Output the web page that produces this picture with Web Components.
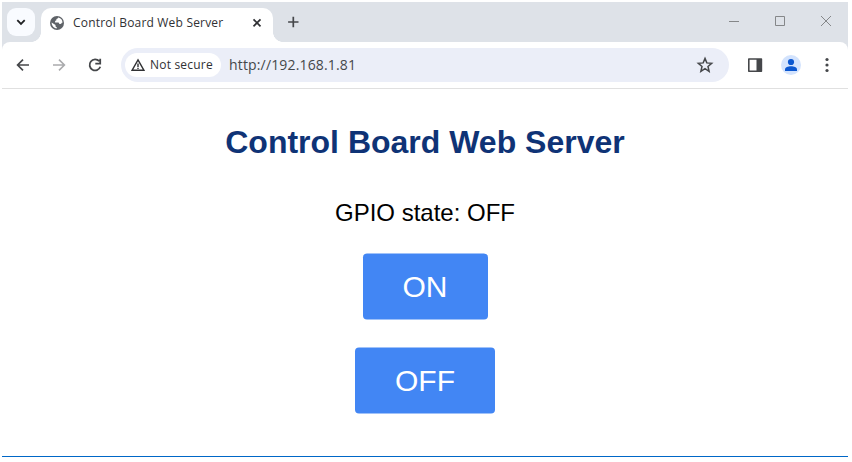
<!DOCTYPE html>
<html lang="en"><head><meta charset="utf-8"><title>Control Board Web Server</title>
<style>html,body{margin:0;background:#fff}body{width:852px;height:462px;overflow:hidden}</style></head>
<body>
<browser-window>
 <tab-strip slot="tabs"><browser-tab>Control Board Web Server</browser-tab></tab-strip>
 <nav-bar slot="nav"><address-bar><span slot="status">Not secure</span>http://192.168.1.81</address-bar></nav-bar>
 <control-page>
  <span slot="title">Control Board Web Server</span>
  <span slot="state">GPIO state: OFF</span>
  <gpio-button>ON</gpio-button>
  <gpio-button>OFF</gpio-button>
 </control-page>
</browser-window>
<script>
function define(name, html) {
  const t = document.createElement('template');
  t.innerHTML = html;
  customElements.define(name, class extends HTMLElement {
    constructor() { super(); this.attachShadow({mode:'open'}).append(t.content.cloneNode(true)); }
  });
}
define('browser-window', `<style>
:host{display:flex;flex-direction:column;box-sizing:border-box;width:846px;height:455px;margin:2px 0 0 2px;border-bottom:1px solid #0067c7;background:#fff}
.chrome{background:#dee2e8;height:86px;border-bottom:1px solid #e0e0e0;flex:none}
</style><div class="chrome"><slot name="tabs"></slot><slot name="nav"></slot></div><slot></slot>`);
define('tab-strip', `<style>
:host{display:flex;height:40px}
svg{display:block}
.search{width:28px;height:28px;border-radius:9px;background:#f9fbff;margin:6px 6px 0 5px;flex:none}
.plus{margin:14px 0 0 14px;flex:none}
.win{margin:10px 13px 0 auto;display:flex;gap:28px}
</style>
<div class="search"><svg width="28" height="28" fill="none" stroke="#202124" stroke-width="1.8"><path d="M10.3 12.2l3.7 3.7 3.7-3.7"/></svg></div>
<slot></slot>
<svg class="plus" width="12" height="12" stroke="#45474a" stroke-width="1.7"><path d="M6.300 .8v10.4M1.100 6h10.400"/></svg>
<div class="win">
<svg width="18" height="18" stroke="#858789" fill="none"><path d="M4 9.5h10"/></svg>
<svg width="18" height="18" stroke="#858789" fill="none"><path d="M4.500 4.500h9v9h-9z"/></svg>
<svg width="18" height="18" stroke="#858789" fill="none"><path d="M4 4l10 10M14 4L4 14"/></svg>
</div>`);
define('browser-tab', `<style>
:host{display:flex;align-items:center;box-sizing:border-box;width:232px;height:34px;margin-top:6px;padding:0 11px 5px 9px;background:#fff;border-radius:10px 10px 0 0;position:relative;font:12px/17px "Open Sans","Noto Sans",sans-serif;color:#303134;white-space:nowrap}
:host::before,:host::after{content:"";position:absolute;bottom:0;width:10px;height:10px}
:host::before{left:-10px;background:radial-gradient(circle at 0 0,transparent 9.600px,#fff 10.200px)}
:host::after{right:-10px;background:radial-gradient(circle at 100% 0,transparent 9.600px,#fff 10.200px)}
.t{margin-left:9px;letter-spacing:.19px}
.x{margin-left:auto}
</style>
<svg width="14" height="14" viewBox="0 0 14 14"><circle cx="7" cy="7" r="7" fill="#5f6368"/><path d="M8.200 1.500c-.2.900-.8 1.300-1.800 1.400v1.300l-1.300.9v1.400h2.800c.9 0 1.400.6 1.400 1.500h1.200c.7 0 1.100-.5 1.300-1.200h.7A5.500 5.500 0 0 0 8.200 1.500zM1.600 6.600c0 3 2.100 5.500 5.100 5.900v-1.400c-.8 0-1.200-.5-1.200-1.300v-.7z" fill="#fff"/></svg>
<span class="t"><slot></slot></span>
<svg class="x" width="10" height="10" stroke="#303134" stroke-width="1.700"><path d="M1.500 1.300l7 7M8.500 1.300l-7 7"/></svg>`);
define('nav-bar', `<style>
:host{display:flex;align-items:center;height:46px;background:#fff;border-radius:8px 8px 0 0}
svg{flex:none;display:block}
.a{margin-left:12px}.b{margin-left:18px}.c{margin:0 17px 0 18px}
.p{margin-left:17px}.u{margin-left:17px}.k{margin-left:16px}
</style>
<svg class="a" width="18" height="18" fill="none" stroke="#45474a" stroke-width="1.700"><path d="M15 9H4M9 3.600L3.600 9 9 14.400"/></svg>
<svg class="b" width="18" height="18" fill="none" stroke="#aaabad" stroke-width="1.600"><path d="M3 9h11M9 3.600L14.400 9 9 14.400"/></svg>
<svg class="c" width="18" height="18" fill="none" stroke="#45474a" stroke-width="1.800"><path d="M13.200 5.200A5.500 5.500 0 1 0 14.300 10.800M14.200 2.800v4.800H9.300"/></svg>
<slot></slot>
<svg class="p" width="18" height="18"><path d="M2.800 3h12.600v12.200H2.800z" fill="#fff" stroke="#45474a" stroke-width="1.600" stroke-linejoin="round"/><path d="M10.500 3h5v12.200h-5z" fill="#45474a"/></svg>
<svg class="u" width="20" height="20"><circle cx="10" cy="10" r="10" fill="#d3e3fd"/><circle cx="10" cy="7" r="3.100" fill="#0b57d0"/><path d="M4 16v-1.700c0-4.200 12-4.200 12 0V16z" fill="#0b57d0"/></svg>
<svg class="k" width="20" height="20" fill="#45474a"><circle cx="10" cy="4.500" r="1.600"/><circle cx="10" cy="10" r="1.600"/><circle cx="10" cy="15.500" r="1.600"/></svg>`);
define('address-bar', `<style>
:host{display:flex;align-items:center;box-sizing:border-box;width:608px;height:34px;border-radius:17px;background:#ebeef8;padding:0 14px 0 4px;color:#45474a;font:14px/20px "Open Sans","Noto Sans",sans-serif;white-space:nowrap}
.chip{display:flex;align-items:center;box-sizing:border-box;width:96px;height:24px;border-radius:12px;background:#fff;padding-left:6px;font-size:12px;color:#303134;letter-spacing:.2px}
.chip svg{margin-right:5px}
.url{margin-left:8px;letter-spacing:.16px}
.star{margin-left:auto}
</style>
<span class="chip"><svg width="14" height="14" viewBox="0 0 14 14" fill="none" stroke="#303134" stroke-width="1.400"><path d="M7 1.900L13 12.300H1z"/><path d="M7 5.400v3.500M7 9.800v1.300"/></svg><slot name="status"></slot></span>
<span class="url"><slot></slot></span>
<svg class="star" width="20" height="20" fill="none" stroke="#45474a" stroke-width="1.500"><path d="M10 3.400l1.800 4.500 4.900.4-3.700 3.200 1.100 4.800L10 13.700l-4.100 2.600L7 11.500 3.300 8.300l4.900-.4z"/></svg>`);
define('control-page', `<style>
:host{display:flex;flex-direction:column;align-items:center;font-family:"Liberation Sans",Arial,sans-serif;color:#000;padding-top:35px}
h1{margin:0;font-size:32px;line-height:37px;color:#0f3376}
p{margin:38px 0 26px;font-size:24px;line-height:28px}
.buttons{display:flex;flex-direction:column;align-items:center;gap:28px}
</style><h1><slot name="title"></slot></h1><p><slot name="state"></slot></p><div class="buttons"><slot></slot></div>`);
define('gpio-button', `<style>
:host{display:block}
button{display:block;border:0;border-radius:4px;background:#4286f4;color:#fff;padding:16px 40px;font:30px/34px "Liberation Sans",Arial,sans-serif;transform:translateY(.5px)}
</style><button><slot></slot></button>`);
</script>
</body></html>
